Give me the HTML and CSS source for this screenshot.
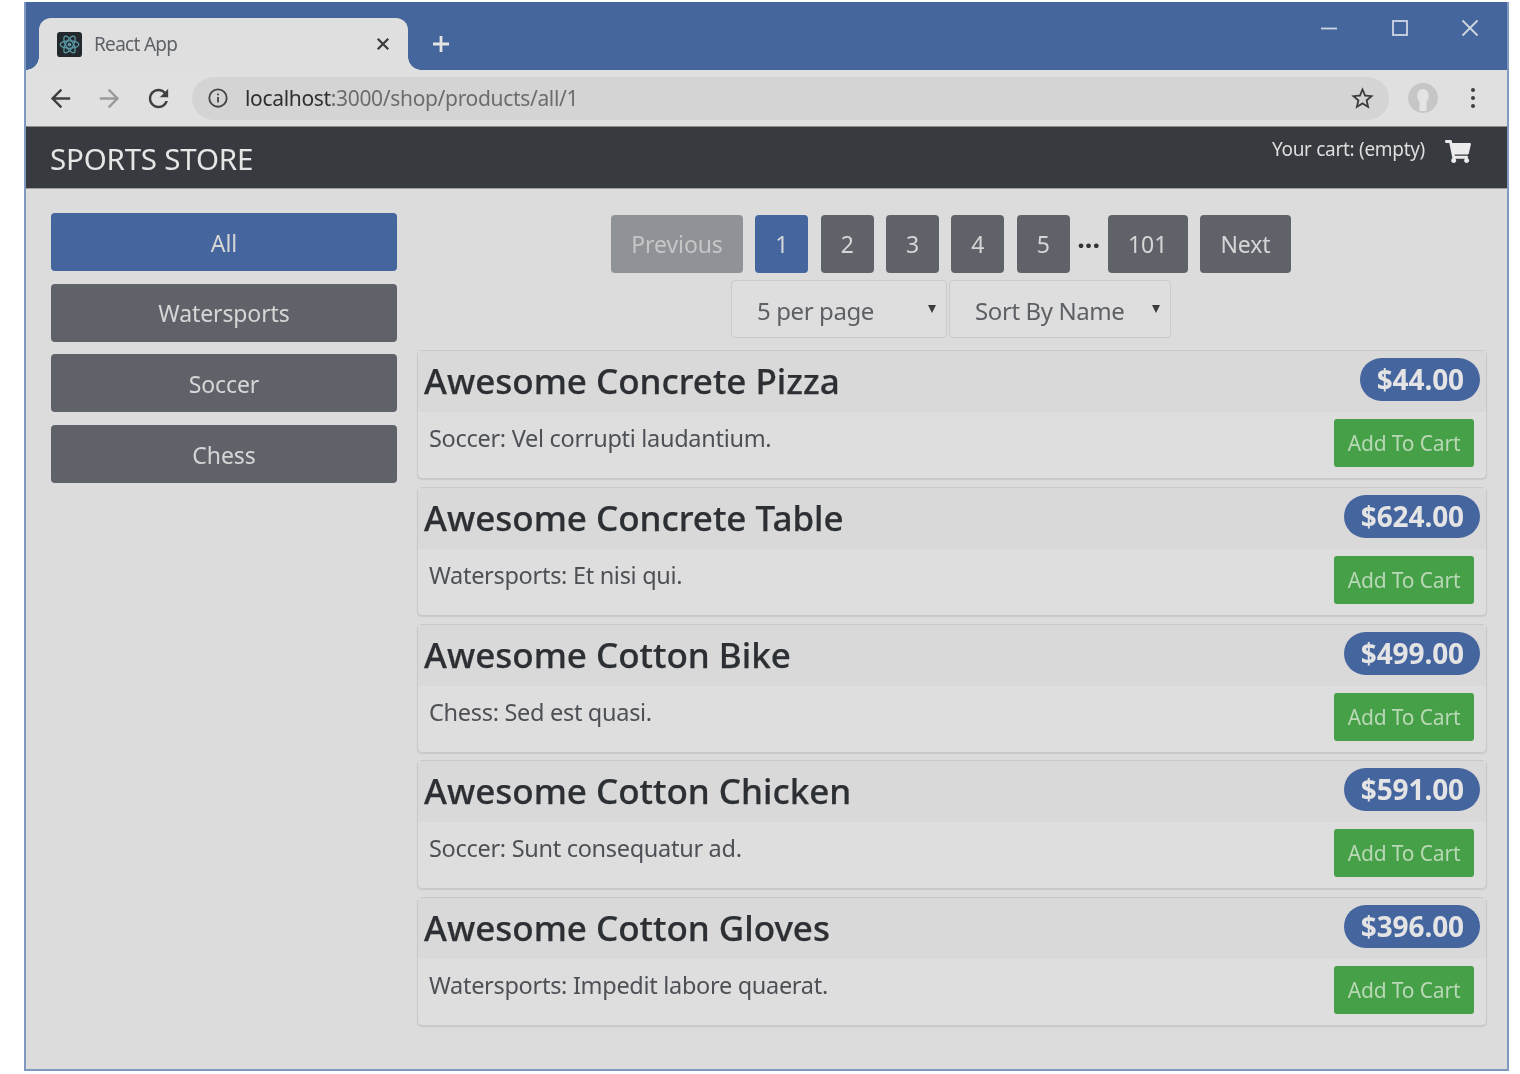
FILE: index.html
```html
<!DOCTYPE html>
<html lang="en">
<head>
  <meta charset="UTF-8">
  <meta name="viewport" content="width=device-width, initial-scale=1.0">
  <title>React App</title>
  <link rel="stylesheet" href="styles.css">
</head>
<body>
  <div class="window">
    <!-- Browser chrome -->
    <div class="tabstrip">
      <div class="tab">
        <svg class="favicon" viewBox="0 0 24 24">
          <rect width="24" height="24" rx="3" fill="#23282c"/>
          <g fill="none" stroke="#5b9aa8" stroke-width="1.2">
            <ellipse cx="12" cy="12" rx="9" ry="3.6"/>
            <ellipse cx="12" cy="12" rx="9" ry="3.6" transform="rotate(60 12 12)"/>
            <ellipse cx="12" cy="12" rx="9" ry="3.6" transform="rotate(120 12 12)"/>
          </g>
          <circle cx="12" cy="12" r="1.8" fill="#5b9aa8"/>
        </svg>
        <span class="tab-title">React App</span>
        <svg class="tab-close" viewBox="0 0 12 12"><path d="M1.5 1.5l9 9M10.5 1.5l-9 9"/></svg>
      </div>
      <svg class="new-tab" viewBox="0 0 18 18"><path d="M9 1v16M1 9h16"/></svg>
      <div class="win-controls">
        <svg viewBox="0 0 18 18"><path d="M1 9.500h16"/></svg>
        <svg viewBox="0 0 18 18"><rect x="2" y="2" width="14" height="14"/></svg>
        <svg viewBox="0 0 18 18"><path d="M1.500 1.500l15 15M16.500 1.500l-15 15"/></svg>
      </div>
    </div>

    <div class="toolbar">
      <svg class="tool" viewBox="0 0 24 24"><path d="M20 11H7.830l5.590-5.590L12 4l-8 8 8 8 1.410-1.410L7.830 13H20v-2z"/></svg>
      <svg class="tool tool-off" viewBox="0 0 24 24"><path d="M4 11h12.170l-5.590-5.590L12 4l8 8-8 8-1.410-1.410L16.170 13H4v-2z"/></svg>
      <svg class="tool" viewBox="0 0 24 24"><path d="M17.650 6.350C16.200 4.900 14.210 4 12 4c-4.420 0-7.990 3.580-7.990 8s3.570 8 7.990 8c3.730 0 6.840-2.550 7.730-6h-2.080c-.82 2.330-3.040 4-5.650 4-3.310 0-6-2.690-6-6s2.690-6 6-6c1.660 0 3.140.69 4.220 1.780L13 11h7V4l-2.350 2.350z"/></svg>
      <div class="urlbar">
        <svg class="info" viewBox="0 0 24 24">
          <circle cx="12" cy="12" r="9.500" fill="none" stroke="#444" stroke-width="2"/>
          <path d="M11 11h2v6h-2zM11 7h2v2h-2z" fill="#444"/>
        </svg>
        <span class="url"><b>localhost</b>:3000/shop/products/all/1</span>
        <svg class="star" viewBox="0 0 24 24"><path d="M22 9.240l-7.190-.62L12 2 9.190 8.630 2 9.240l5.460 4.730L5.820 21 12 17.270 18.180 21l-1.630-7.030L22 9.240zM12 15.400l-3.760 2.270 1-4.280-3.320-2.880 4.380-.38L12 6.100l1.710 4.040 4.380.38-3.320 2.880 1 4.280L12 15.400z"/></svg>
      </div>
      <svg class="avatar" viewBox="0 0 30 30">
        <circle cx="15" cy="15" r="15" fill="#c6c6c6"/>
        <path d="M11.500 28V18.500c-3.500-2.500-3.500-12 3.500-12.500 7 .5 7 10 3.500 12.500V28z" fill="#e4e4e4"/>
      </svg>
      <div class="menu-dots"><i></i><i></i><i></i></div>
    </div>

    <!-- Store header -->
    <div class="navbar">
      <div class="brand">SPORTS STORE</div>
      <div class="cart">
        <span>Your cart: (empty)</span>
        <svg viewBox="0 0 576 512"><path d="M528.120 301.319l47.273-208C578.806 78.301 567.391 64 551.990 64H159.208l-9.166-44.810C147.758 8.021 137.930 0 126.529 0H24C10.745 0 0 10.745 0 24v16c0 13.255 10.745 24 24 24h69.883l70.248 343.435C147.325 417.100 136 435.222 136 456c0 30.928 25.072 56 56 56s56-25.072 56-56c0-15.674-6.447-29.835-16.824-40h209.647C430.447 426.165 424 440.326 424 456c0 30.928 25.072 56 56 56s56-25.072 56-56c0-22.172-12.888-41.332-31.579-50.405l5.517-24.276c3.413-15.018-8.002-29.319-23.403-29.319H218.117l-6.545-32h293.145c11.206 0 20.920-7.754 23.403-18.681z"/></svg>
      </div>
    </div>

    <div class="shop">
      <div class="categories">
        <button class="btn btn-blue">All</button>
        <button class="btn btn-grey">Watersports</button>
        <button class="btn btn-grey">Soccer</button>
        <button class="btn btn-grey">Chess</button>
      </div>

      <div class="products">
        <div class="pager">
          <button class="page page-prev">Previous</button>
          <button class="page page-on">1</button>
          <button class="page">2</button>
          <button class="page">3</button>
          <button class="page">4</button>
          <button class="page">5</button>
          <span class="dots">...</span>
          <button class="page page-last">101</button>
          <button class="page page-next">Next</button>
        </div>
        <div class="selects">
          <div class="select select-size">5 per page<i></i></div>
          <div class="select select-sort">Sort By Name<i></i></div>
        </div>

        <div class="card">
          <div class="card-head"><h4>Awesome Concrete Pizza</h4><span class="price">$44.00</span></div>
          <div class="card-body"><span class="desc">Soccer: Vel corrupti laudantium.</span><button class="add">Add To Cart</button></div>
        </div>
        <div class="card">
          <div class="card-head"><h4>Awesome Concrete Table</h4><span class="price">$624.00</span></div>
          <div class="card-body"><span class="desc">Watersports: Et nisi qui.</span><button class="add">Add To Cart</button></div>
        </div>
        <div class="card">
          <div class="card-head"><h4>Awesome Cotton Bike</h4><span class="price">$499.00</span></div>
          <div class="card-body"><span class="desc">Chess: Sed est quasi.</span><button class="add">Add To Cart</button></div>
        </div>
        <div class="card">
          <div class="card-head"><h4>Awesome Cotton Chicken</h4><span class="price">$591.00</span></div>
          <div class="card-body"><span class="desc">Soccer: Sunt consequatur ad.</span><button class="add">Add To Cart</button></div>
        </div>
        <div class="card">
          <div class="card-head"><h4>Awesome Cotton Gloves</h4><span class="price">$396.00</span></div>
          <div class="card-body"><span class="desc">Watersports: Impedit labore quaerat.</span><button class="add">Add To Cart</button></div>
        </div>
      </div>
    </div>
  </div>
</body>
</html>
```

FILE: styles.css
```css
html, body {
  margin: 0;
  padding: 0;
  background-color: #fff;
}
body {
  font-family: "Noto Sans", "Open Sans", sans-serif;
  height: 1074px;
  overflow: hidden;
}
button {
  font-family: inherit;
  border: none;
  cursor: pointer;
}

.window {
  box-sizing: border-box;
  width: 1485px;
  height: 1069px;
  margin: 2px 0 0 24px;
  border: 2px solid #7f99c0;
  border-top: none;
  background-color: #dcdcdc;
  filter: blur(0.7px);
}

/* tab strip */
.tabstrip {
  height: 68px;
  background-color: #45669c;
  display: flex;
  align-items: flex-end;
  padding-left: 13px;
}
.tab {
  position: relative;
  box-sizing: border-box;
  width: 369px;
  height: 52px;
  background-color: #dfdfdf;
  border-radius: 12px 12px 0 0;
  display: flex;
  align-items: center;
  padding: 0 18px 0 18px;
}
.tab::before,
.tab::after {
  content: "";
  position: absolute;
  bottom: 0;
  width: 13px;
  height: 13px;
}
.tab::before {
  left: -13px;
  background: radial-gradient(circle at 0 0, transparent 12.500px, #dfdfdf 13px);
}
.tab::after {
  right: -13px;
  background: radial-gradient(circle at 100% 0, transparent 12.500px, #dfdfdf 13px);
}
.favicon {
  width: 25px;
  height: 25px;
}
.tab-title {
  flex: 1;
  margin-left: 12px;
  font-size: 19px;
  color: #5f6368;
  letter-spacing: -0.7px;
}
.tab-close {
  width: 14px;
  height: 14px;
  fill: none;
  stroke: #3c3c3c;
  stroke-width: 2;
}
.new-tab {
  width: 18px;
  height: 18px;
  margin: 0 0 17px 24px;
  fill: none;
  stroke: #e4e4e4;
  stroke-width: 2.800;
}
.win-controls {
  margin-left: auto;
  align-self: flex-start;
  display: flex;
  gap: 52.500px;
  padding: 17px 28px 0 0;
}
.win-controls svg {
  width: 18px;
  height: 18px;
  fill: none;
  stroke: #cfd6e2;
  stroke-width: 1.800;
}

/* toolbar */
.toolbar {
  height: 57px;
  background-color: #e0e0e0;
  display: flex;
  align-items: center;
  padding: 0 32px 0 20px;
  border-bottom: 1px solid #8a8a8a;
  box-sizing: border-box;
}
.tool {
  width: 29px;
  height: 29px;
  margin-right: 20px;
  fill: #3f3f3f;
  flex: none;
}
.tool-off {
  fill: #9a9a9a;
}
.urlbar {
  flex: 1;
  height: 43px;
  margin-left: -1px;
  border-radius: 22px;
  background-color: #d4d4d4;
  display: flex;
  align-items: center;
  padding: 0 13px 0 15px;
}
.info {
  width: 22px;
  height: 22px;
}
.url {
  flex: 1;
  margin-left: 16px;
  font-size: 21px;
  color: #6c6c6c;
  letter-spacing: -0.33px;
}
.url b {
  font-weight: 400;
  color: #2f2f2f;
}
.star {
  width: 27px;
  height: 27px;
  fill: #3c3c3c;
}
.avatar {
  width: 30px;
  height: 30px;
  margin-left: 19px;
  flex: none;
}
.menu-dots {
  display: flex;
  flex-direction: column;
  gap: 4px;
  margin-left: 33px;
}
.menu-dots i {
  width: 4px;
  height: 4px;
  border-radius: 50%;
  background-color: #3f3f3f;
}

/* store navbar */
.navbar {
  height: 62px;
  background-color: #373a3e;
  display: flex;
  justify-content: space-between;
  padding: 0 36px 0 24px;
  border-bottom: 1px solid #a0a0a0;
  box-sizing: border-box;
}
.brand {
  font-size: 29.500px;
  color: #e6e6e6;
  line-height: 64px;
  letter-spacing: -0.2px;
}
.cart {
  display: flex;
  align-items: flex-start;
  gap: 20px;
  padding-top: 9px;
  color: #dedede;
  font-size: 19px;
  letter-spacing: -0.3px;
}
.cart svg {
  width: 26px;
  height: 23px;
  margin-top: 4px;
  fill: #ececec;
}

/* page body */
.shop {
  display: flex;
  padding: 24px 20px 0 25px;
  gap: 20px;
}
.categories {
  width: 346px;
  flex: none;
  display: flex;
  flex-direction: column;
  gap: 12.700px;
}
.btn {
  height: 58px;
  border-radius: 4px;
  font-size: 23px;
  letter-spacing: -0.1px;
  color: #d6d6d6;
  padding-top: 2px;
}
.btn-blue {
  background-color: #45659f;
}
.btn-grey {
  background-color: #5f6369;
}
.products {
  flex: 1;
  min-width: 0;
}
.pager {
  display: flex;
  justify-content: center;
  align-items: center;
  gap: 12.330px;
  height: 58px;
  margin-top: 2px;
  padding-right: 2px;
}
.page {
  width: 53px;
  height: 58px;
  border-radius: 4px;
  background-color: #5f6369;
  color: #d6d6d6;
  font-size: 23px;
  letter-spacing: -0.1px;
  padding: 0;
}
.page-prev {
  width: 132px;
  background-color: #8f9296;
  color: #c6c6c6;
}
.page-on {
  background-color: #45659f;
}
.page-last {
  width: 80px;
}
.page-next {
  width: 91px;
}
.dots {
  width: 38px;
  margin: -12px -12.330px 0;
  text-align: center;
  font-size: 27px;
  font-weight: 700;
  line-height: 30px;
  color: #333;
}
.selects {
  display: flex;
  justify-content: center;
  gap: 2px;
  margin-top: 7px;
  margin-bottom: 12px;
  padding-right: 2px;
}
.select {
  position: relative;
  box-sizing: border-box;
  height: 58px;
  line-height: 60px;
  padding-left: 25px;
  font-size: 24px;
  letter-spacing: -0.4px;
  color: #5d6165;
  background-color: #dedede;
  border: 1px solid #cbcbcb;
  border-radius: 4px;
}
.select-size {
  width: 216px;
}
.select-sort {
  width: 222px;
}
.select i {
  position: absolute;
  top: 24px;
  right: 10px;
  border-left: 4px solid transparent;
  border-right: 4px solid transparent;
  border-top: 8px solid #3a3a3a;
}

/* product cards */
.card {
  box-sizing: border-box;
  height: 129px;
  margin-bottom: 7.800px;
  background-color: #dedede;
  border: 1px solid #c9c9c9;
  border-radius: 5px;
  box-shadow: 0 1px 1px #c8c8c8;
}
.card-head {
  height: 61px;
  padding: 0 6px;
  background-color: #d9d9d9;
  display: flex;
  justify-content: space-between;
  align-items: flex-start;
}
.card-head h4 {
  margin: 3px 0 0 0;
  font-size: 35px;
  font-weight: 500;
  line-height: 54px;
  color: #2c2f33;
  -webkit-text-stroke: 0.25px #2c2f33;
}
.price {
  margin-top: 7px;
  height: 43px;
  line-height: 43px;
  padding: 0 16px 0 17px;
  border-radius: 22px;
  background-color: #45659f;
  color: #e4e4e4;
  font-size: 28px;
  font-weight: 700;
  letter-spacing: -0.1px;
}
.card-body {
  display: flex;
  justify-content: space-between;
  align-items: flex-start;
  padding: 7px 12px 0 11px;
}
.desc {
  margin-top: 3px;
  font-size: 23.500px;
  letter-spacing: -0.3px;
  color: #4d5156;
}
.add {
  width: 140px;
  height: 48px;
  border-radius: 3px;
  background-color: #46a048;
  color: #b9d8b6;
  font-size: 21px;
  letter-spacing: -0.15px;
  padding: 0;
}
```
